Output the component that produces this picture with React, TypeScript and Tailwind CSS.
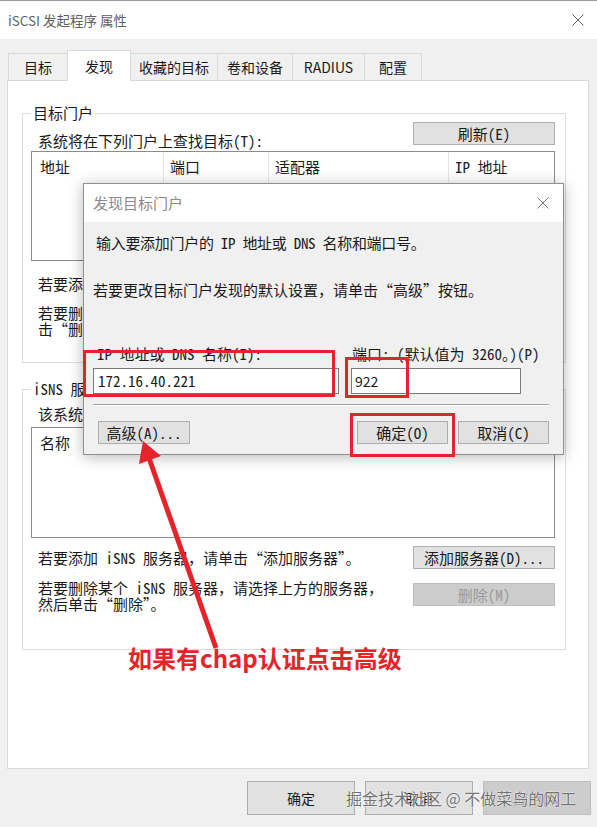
import React from 'react';

const ui = "font-['Noto_Sans_CJK_SC','Noto_Sans',sans-serif]";
const song = "font-['Noto_Sans_Mono_CJK_SC','Noto_Sans_CJK_SC',monospace]";

const CloseIcon = ({ size = 13, color = '#5a5a5a' }: { size?: number; color?: string }) => (
  <svg width={size} height={size} viewBox="0 0 13 13" fill="none" stroke={color} strokeWidth="1">
    <path d="M0.5 0.5 L12.5 12.5 M12.5 0.5 L0.5 12.5" />
  </svg>
);

const WinButton = ({
  children,
  className = '',
  disabled = false,
}: {
  children: React.ReactNode;
  className?: string;
  disabled?: boolean;
}) => (
  <div
    className={`flex items-center justify-center border ${
      disabled ? 'border-[#bfbfbf] bg-[#cccccc] text-[#9a9a9a]' : 'border-[#adadad] bg-[#e1e1e1] text-[#1a1a1a]'
    } ${className}`}
  >
    {children}
  </div>
);

const tabs = [
  { label: '目标', cls: 'w-[59px] h-[27px] border-l border-t' },
  { label: '发现', cls: 'w-[64px] h-[31px] -mb-px border-x border-t bg-white', active: true },
  { label: '收藏的目标', cls: 'w-[87px] h-[27px] border-t border-r' },
  { label: '卷和设备', cls: 'w-[75px] h-[27px] border-t border-r' },
  { label: 'RADIUS', cls: 'w-[72px] h-[27px] border-t border-r' },
  { label: '配置', cls: 'w-[57px] h-[27px] border-t border-r' },
];

const DiscoverDialog = () => (
  <div className="absolute left-[83px] top-[183px] h-[272px] w-[481px] border border-[#8f8f8f] bg-[#f0f0f0] shadow-[0_2px_14px_rgba(0,0,0,0.28)]">
    <div className="flex h-[38px] items-center justify-between bg-white pl-[9px] pr-[14px]">
      <span className={`${ui} text-[15px] text-[#8a8a8a]`}>发现目标门户</span>
      <CloseIcon size={12} color="#6a6a6a" />
    </div>
    <div className={`${song} text-[15px] leading-[16px] text-[#1a1a1a]`}>
      <p className="mt-[13px] pl-[12px] tracking-[-0.3px]">输入要添加门户的 IP 地址或 DNS 名称和端口号。</p>
      <p className="mt-[31px] pl-[9px]">若要更改目标门户发现的默认设置，请单击“高级”按钮。</p>
      <div className="mt-[48px] flex gap-[12px] pl-[9px]">
        <div className="w-[246px]">
          <div className="pl-[4px] whitespace-nowrap">IP 地址或 DNS 名称(I):</div>
          <div className="mt-[6px] flex h-[26px] items-center border border-[#7a7a7a] bg-white pl-[4px]">172.16.40.221</div>
        </div>
        <div className="w-[170px]">
          <div className="pl-[1px] whitespace-nowrap">端口: (默认值为 3260。)(P)</div>
          <div className={`mt-[6px] flex h-[26px] items-center border border-[#7a7a7a] bg-white pl-[3px] ${ui} text-[14px]`}>922</div>
        </div>
      </div>
      <div className="ml-[9px] mt-[10px] w-[456px] border-b border-t border-b-white border-t-[#a0a0a0]" />
      <div className="mt-[15px] flex justify-between px-[14px]">
        <WinButton className="h-[23px] w-[92px]">高级(A)...</WinButton>
        <div className="flex gap-[10px]">
          <WinButton className="h-[23px] w-[91px]">确定(O)</WinButton>
          <WinButton className="h-[23px] w-[91px]">取消(C)</WinButton>
        </div>
      </div>
    </div>
  </div>
);

export default function App() {
  return (
    <div className="relative h-[827px] w-[597px] overflow-hidden bg-[#f0f0f0] text-[#1a1a1a]">
      {/* title bar */}
      <div className="flex h-[39px] items-center justify-between border-t border-[#9b9b9b] bg-white pl-[8px] pr-[13px]">
        <span className={`${ui} text-[13.5px] text-[#5f5f5f]`}>iSCSI 发起程序 属性</span>
        <CloseIcon size={12} color="#555" />
      </div>

      {/* tabs */}
      <div className="relative z-10 flex h-[41px] items-end pl-[8px]">
        {tabs.map(t => (
          <div
            key={t.label}
            className={`${ui} flex items-center justify-center border-[#d9d9d9] text-[14px] ${t.cls}`}
          >
            {t.label}
          </div>
        ))}
      </div>

      {/* tab panel */}
      <div className={`${song} ml-[7px] h-[689px] w-[582px] border border-[#d9d9d9] bg-white text-[15px] leading-[16px]`}>
        <fieldset className="ml-[14px] mt-[22px] h-[260px] w-[544px] border border-[#dcdcdc] pl-[8px] pr-[10px]">
          <legend className={`${ui} px-[2px] text-[15px] leading-[20px]`}>目标门户</legend>
          <div className="-mt-[1px] flex items-start justify-between">
            <span className="ml-[7px] mt-[11px]">系统将在下列门户上查找目标(T):</span>
            <WinButton className="h-[23px] w-[142px]">刷新(E)</WinButton>
          </div>
          <div className="mt-[2px] h-[110px] w-[524px] border border-[#8c8c8c]">
            <div className={`${ui} flex h-[30px] text-[15px]`}>
              <div className="flex w-[132px] items-center border-r border-[#e5e5e5] pl-[8px]">地址</div>
              <div className="flex w-[105px] items-center border-r border-[#e5e5e5] pl-[6px]">端口</div>
              <div className="flex w-[180px] items-center border-r border-[#e5e5e5] pl-[6px]">适配器</div>
              <div className={`${song} flex flex-1 items-center pl-[6px]`}>IP 地址</div>
            </div>
          </div>
          <p className="ml-[7px] mt-[15px]">若要添加目标门户，请单击“发现门户”。</p>
          <p className="ml-[7px] mt-[13px]">
            若要删除某个目标门户，请选择上方的地址，然后单
            <br />
            击“删除”。
          </p>
        </fieldset>

        <fieldset className="ml-[14px] mt-[16px] h-[271px] w-[544px] border border-[#dcdcdc] pl-[8px] pr-[10px]">
          <legend className="px-[2px] text-[15px] leading-[20px]">iSNS 服务器</legend>
          <p className="ml-[7px] mt-[7px]">该系统已在下列 iSNS 服务器上注册(I):</p>
          <div className="mt-[5px] h-[111px] w-[524px] border border-[#8c8c8c]">
            <div className={`${ui} flex h-[30px] items-center pl-[8px] text-[15px]`}>名称</div>
          </div>
          <div className="mt-[8px] flex h-[23px] items-center justify-between">
            <span className="ml-[7px]">若要添加 iSNS 服务器，请单击“添加服务器”。</span>
            <WinButton className="h-[23px] w-[142px]">添加服务器(D)...</WinButton>
          </div>
          <div className="mt-[11px] flex items-start justify-between">
            <p className="ml-[7px]">
              若要删除某个 iSNS 服务器，请选择上方的服务器，
              <br />
              然后单击“删除”。
            </p>
            <WinButton disabled className="mt-[3px] h-[23px] w-[142px]">删除(M)</WinButton>
          </div>
        </fieldset>
      </div>

      {/* bottom buttons */}
      <div className={`${ui} mt-[12px] flex gap-[10px] pl-[247px] text-[14px]`}>
        <WinButton className="h-[34px] w-[108px]">确定</WinButton>
        <WinButton className="h-[34px] w-[108px]">取消</WinButton>
        <WinButton disabled className="h-[34px] w-[108px]">应用(A)</WinButton>
      </div>

      <DiscoverDialog />

      {/* annotations */}
      <div className="pointer-events-none absolute left-[83px] top-[350px] h-[47px] w-[252px] border-[3px] border-[#e4232b]" />
      <div className="pointer-events-none absolute left-[345px] top-[357px] h-[41px] w-[64px] border-[3px] border-[#e4232b]" />
      <div className="pointer-events-none absolute left-[350px] top-[413px] h-[44px] w-[105px] border-[3px] border-[#e4232b]" />

      <svg className="pointer-events-none absolute left-0 top-0" width="597" height="827">
        <line x1="216" y1="648" x2="149" y2="458" stroke="#e4232b" strokeWidth="5" />
        <polygon points="143,441 139,464 161,456" fill="#e4232b" />
      </svg>

      <div className={`${ui} absolute left-[128px] top-[643px] text-[24px] font-bold leading-[30px] text-[#e4232b]`}>
        如果有chap认证点击高级
      </div>

      <div className={`${ui} absolute left-[346px] top-[787px] text-[16px] leading-[22px] text-[#737373] [text-shadow:0_0_2px_#fff,0_0_1px_#fff]`}>
        掘金技术社区 @ 不做菜鸟的网工
      </div>
    </div>
  );
}
